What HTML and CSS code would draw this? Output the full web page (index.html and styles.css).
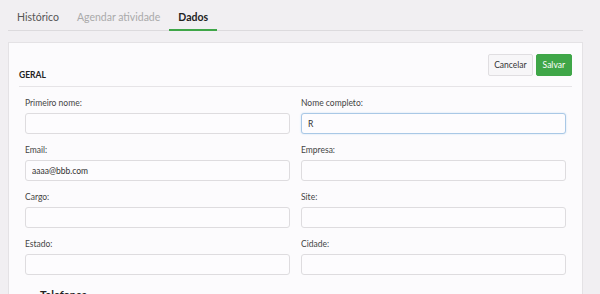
FILE: index.html
```html
<!DOCTYPE html>
<html lang="pt-BR">
<head>
    <meta charset="UTF-8">
    <title>Dados</title>
    <link rel="stylesheet" href="styles.css">
</head>
<body>
<div class="page">
    <nav class="tabs">
        <a class="tab">Histórico</a>
        <a class="tab disabled">Agendar atividade</a>
        <a class="tab active">Dados</a>
    </nav>

    <div class="card">
        <div class="card-header">
            <h2 class="section-title">GERAL</h2>
            <div class="actions">
                <button class="btn">Cancelar</button>
                <button class="btn btn-green">Salvar</button>
            </div>
        </div>

        <div class="form">
            <div class="field">
                <label>Primeiro nome:</label>
                <input type="text">
            </div>
            <div class="field">
                <label>Nome completo:</label>
                <input type="text" class="focused" value="R">
            </div>
            <div class="field">
                <label>Email:</label>
                <input type="text" value="aaaa@bbb.com">
            </div>
            <div class="field">
                <label>Empresa:</label>
                <input type="text">
            </div>
            <div class="field">
                <label>Cargo:</label>
                <input type="text">
            </div>
            <div class="field">
                <label>Site:</label>
                <input type="text">
            </div>
            <div class="field">
                <label>Estado:</label>
                <input type="text">
            </div>
            <div class="field">
                <label>Cidade:</label>
                <input type="text">
            </div>
        </div>

        <h2 class="section-title next">Telefones</h2>
    </div>
</div>
</body>
</html>
```

FILE: styles.css
```css
body {
    margin: 0;
    background: #f1eff2;
    font-family: Lato, "Open Sans", sans-serif;
    color: #333;
    height: 294px;
    overflow: hidden;
}
.page {
    margin: 0 17px 0 8px;
}
.tabs {
    display: flex;
    height: 30px;
    border-bottom: 1px solid #dcdadd;
}
.tab {
    padding: 0 9px;
    line-height: 34px;
    font-size: 10.5px;
    color: #555;
    border-bottom: 2px solid transparent;
    margin-bottom: -1px;
}
.tab.disabled {
    color: #aaa;
}
.tab.active {
    color: #222;
    font-weight: bold;
    border-bottom-color: #3fa648;
}
.card {
    margin-top: 11px;
    background: #fcfbfd;
    border: 1px solid #e4e2e5;
    padding: 11px 10px 20px 10px;
}
.card-header {
    display: flex;
    align-items: flex-end;
    justify-content: space-between;
    padding-bottom: 10px;
    border-bottom: 1px solid #e6e4e7;
}
.section-title {
    margin: 0 0 -5px 0;
    font-size: 8.5px;
    font-weight: bold;
    color: #222;
    line-height: 12px;
}
.actions {
    display: flex;
    gap: 3px;
}
.btn {
    height: 22px;
    padding: 0 5px;
    font-family: Lato, "Open Sans", sans-serif;
    font-size: 8.5px;
    color: #333;
    background: #f7f6f8;
    border: 1px solid #e0dee1;
    border-radius: 2px;
}
.btn-green {
    padding: 0 6px;
    background: #3fa648;
    border-color: #3fa648;
    color: #fff;
}
.form {
    display: grid;
    grid-template-columns: 265px 265px;
    column-gap: 11px;
    row-gap: 10px;
    padding: 10px 6px 0 6px;
}
.field label {
    display: block;
    font-size: 8.5px;
    color: #444;
    line-height: 12px;
    margin-bottom: 4px;
}
.field input {
    display: block;
    box-sizing: border-box;
    width: 100%;
    height: 21px;
    border: 1px solid #dedcdf;
    border-radius: 3px;
    background: #fdfcfe;
    padding: 0 6px;
    font-family: Lato, "Open Sans", sans-serif;
    font-size: 8.5px;
    color: #333;
    outline: none;
}
.field input.focused {
    border-color: #a9c8e6;
    box-shadow: 0 0 2px #c6dcf1;
}
.section-title.next {
    margin: 14px 0 0 21px;
    font-size: 11px;
}
```
